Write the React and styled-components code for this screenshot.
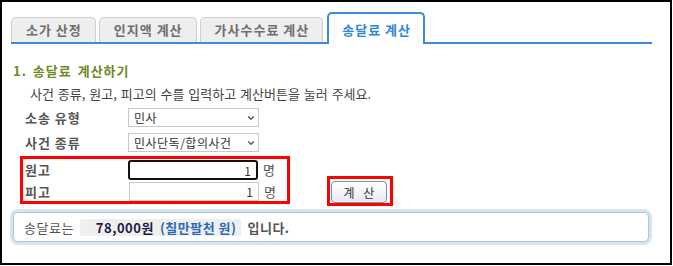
import styled, { createGlobalStyle } from "styled-components";
import { ChevronDown } from "lucide-react";

const GlobalStyle = createGlobalStyle`
  html, body {
    margin: 0;
    padding: 0;
    background: #fff;
  }
  body {
    font-family: "Noto Sans CJK KR", "Noto Sans", sans-serif;
    color: #444;
  }
`;

const Frame = styled.div`
  box-sizing: border-box;
  width: 672px;
  height: 265px;
  border: 2px solid #000;
  padding: 10px 18px 0 8px;
`;

const TabBar = styled.ul`
  margin: 0 0 0 1px;
  padding: 0;
  list-style: none;
  display: flex;
  align-items: flex-end;
  border-bottom: 2px solid #3a8ddc;
`;

const Tab = styled.li`
  box-sizing: border-box;
  margin-right: ${(p) => (p.$active ? "0" : "3px")};
  margin-left: ${(p) => (p.$active ? "1px" : "0")};
  padding: ${(p) => (p.$active ? "8px 12px 6px 13px" : "4px 13px 4px 14px")};
  font-size: 13px;
  line-height: 16px;
  font-weight: 700;
  letter-spacing: 1px;
  white-space: nowrap;
  border-radius: 5px 5px 0 0;
  color: ${(p) => (p.$active ? "#2f86da" : "#6e6e6e")};
  background: ${(p) => (p.$active ? "#fff" : "#eeeeee")};
  border: ${(p) => (p.$active ? "2px solid #3a8ddc" : "1px solid #cfcfcf")};
  border-bottom: none;
  margin-bottom: ${(p) => (p.$active ? "-2px" : "0")};
`;

const Heading = styled.h3`
  margin: 19px 0 0 3px;
  font-size: 13px;
  line-height: 16px;
  font-weight: 700;
  letter-spacing: 1px;
  word-spacing: 2px;
  color: #6e8b1e;
`;

const Guide = styled.p`
  margin: 7px 0 0 20px;
  font-size: 13px;
  line-height: 16px;
  word-spacing: 1px;
  color: #444;
`;

const Form = styled.div`
  margin: 6px 0 0 15px;
  display: flex;
  flex-direction: column;
`;

const Row = styled.div`
  display: grid;
  grid-template-columns: ${(p) => p.$label}px auto;
  align-items: center;
  height: ${(p) => p.$height || 19}px;
  margin-bottom: ${(p) => p.$gap || 0}px;
`;

const Label = styled.span`
  font-size: 13px;
  line-height: 16px;
  font-weight: 700;
  letter-spacing: 1px;
  color: #555;
  white-space: nowrap;
`;

const SelectBox = styled.div`
  position: relative;
  width: 131px;
  height: 19px;
`;

const Select = styled.select`
  appearance: none;
  box-sizing: border-box;
  display: block;
  width: 100%;
  height: 100%;
  border: 1px solid #c8c8c8;
  border-radius: 0;
  background: #fff;
  padding: 0 0 0 5px;
  font-family: inherit;
  font-size: 12px;
  letter-spacing: 0.5px;
  color: #333;
  outline: none;
`;

const Arrow = styled(ChevronDown)`
  position: absolute;
  right: 3px;
  top: 5px;
  width: 10px;
  height: 10px;
  color: #555;
  pointer-events: none;
`;

const CountArea = styled.div`
  display: flex;
  align-items: flex-start;
  margin: 4px 0 0 -5px;
`;

const Highlight = styled.div`
  border: 3px solid #ff0000;
  padding: ${(p) => p.$pad};
  margin-top: ${(p) => p.$top || 0}px;
  margin-left: ${(p) => p.$left || 0}px;
`;

const InputGroup = styled.div`
  display: flex;
  align-items: center;
`;

const NumberInput = styled.input`
  box-sizing: border-box;
  display: block;
  width: 130px;
  height: ${(p) => (p.$focused ? "20px" : "19px")};
  margin: ${(p) => (p.$focused ? "0 0 0 -1px" : "0")};
  padding: 0 5px 0 0;
  text-align: right;
  font-family: inherit;
  font-size: 12px;
  color: #333;
  background: #fff;
  border: ${(p) => (p.$focused ? "2px solid #111" : "1px solid #c8c8c8")};
  border-radius: ${(p) => (p.$focused ? "3px" : "0")};
  outline: none;
`;

const Unit = styled.span`
  margin-left: 5px;
  font-size: 13px;
  line-height: 16px;
  color: #555;
`;

const CalcButton = styled.button`
  box-sizing: border-box;
  display: block;
  width: 56px;
  height: 22px;
  padding: 0;
  font-family: inherit;
  font-size: 12px;
  letter-spacing: 3px;
  text-indent: 3px;
  color: #333;
  border: 1px solid #7b93b3;
  border-radius: 4px;
  background: linear-gradient(#ffffff, #e6ecf3);
`;

const ResultOuter = styled.div`
  margin-top: 3px;
  padding: 3px;
  border-radius: 8px;
  background: #d8e4ee;
`;

const ResultInner = styled.div`
  display: flex;
  align-items: center;
  height: 28px;
  padding: 0 10px;
  border: 1px solid #a9c8df;
  border-radius: 5px;
  background: #fff;
  font-size: 13px;
  letter-spacing: 0.5px;
  color: #555;
`;

const Amount = styled.span`
  margin-left: 6px;
  padding: 0 5px 0 16px;
  line-height: 17px;
  background: #efefef;
  font-weight: 700;
`;

const Won = styled.span`
  color: ${(p) => p.$color};
  margin-right: ${(p) => p.$gap || 0}px;
`;

const Tail = styled.span`
  margin-left: 6px;
  font-weight: 700;
  color: #555;
`;

const tabs = ["소가 산정", "인지액 계산", "가사수수료 계산", "송달료 계산"];

export default function App() {
  return (
    <>
      <GlobalStyle />
      <Frame>
        <TabBar>
          {tabs.map((t, i) => (
            <Tab key={t} $active={i === 3}>
              {t}
            </Tab>
          ))}
        </TabBar>

        <Heading>1. 송달료 계산하기</Heading>
        <Guide>사건 종류, 원고, 피고의 수를 입력하고 계산버튼을 눌러 주세요.</Guide>

        <Form>
          <Row $label={103} $gap={6}>
            <Label>소송 유형</Label>
            <SelectBox>
              <Select defaultValue="civil">
                <option value="civil">민사</option>
              </Select>
              <Arrow strokeWidth={3} />
            </SelectBox>
          </Row>
          <Row $label={103}>
            <Label>사건 종류</Label>
            <SelectBox>
              <Select defaultValue="single">
                <option value="single">민사단독/합의사건</option>
              </Select>
              <Arrow strokeWidth={3} />
            </SelectBox>
          </Row>

          <CountArea>
            <Highlight $pad="1px 11px 0 2px">
              <Row $label={104} $height={20} $gap={2}>
                <Label>원고</Label>
                <InputGroup>
                  <NumberInput $focused defaultValue="1" />
                  <Unit>명</Unit>
                </InputGroup>
              </Row>
              <Row $label={104}>
                <Label>피고</Label>
                <InputGroup>
                  <NumberInput defaultValue="1" />
                  <Unit>명</Unit>
                </InputGroup>
              </Row>
            </Highlight>
            <Highlight $pad="2px 3px 0 1px" $top={20} $left={37}>
              <CalcButton>계 산</CalcButton>
            </Highlight>
          </CountArea>
        </Form>

        <ResultOuter>
          <ResultInner>
            송달료는
            <Amount>
              <Won $color="#1c1c46" $gap={6}>78,000원</Won>
              <Won $color="#2d6bb6">(칠만팔천 원)</Won>
            </Amount>
            <Tail>입니다.</Tail>
          </ResultInner>
        </ResultOuter>
      </Frame>
    </>
  );
}
